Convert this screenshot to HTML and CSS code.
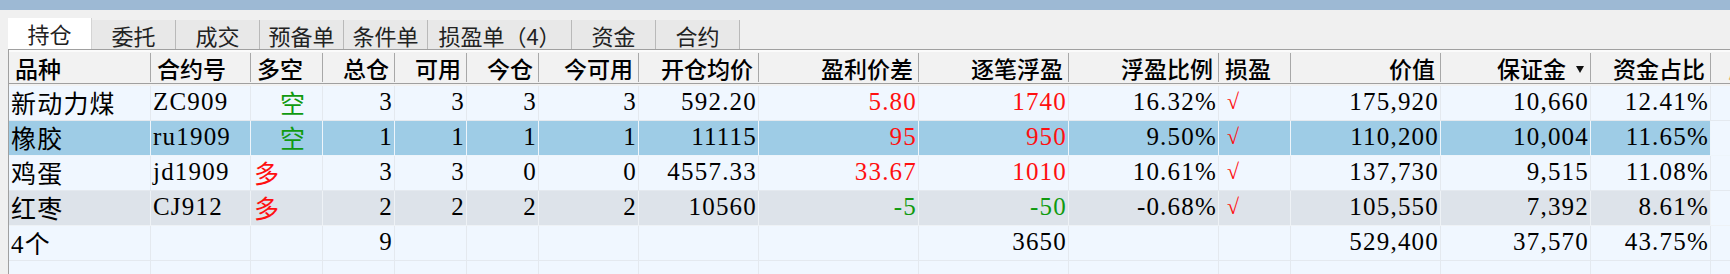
FILE: index.html
```html
<!DOCTYPE html>
<html lang="zh-CN">

<head>
  <meta charset="UTF-8">
  <title>持仓</title>
  <link rel="stylesheet" href="styles.css">
</head>

<body>
  <div class="titlebar"></div>

  <div class="tabs">
    <div class="tab active">持仓</div>
    <div class="tab">委托</div>
    <div class="tab">成交</div>
    <div class="tab">预备单</div>
    <div class="tab">条件单</div>
    <div class="tab wide">损盈单（4）</div>
    <div class="tab">资金</div>
    <div class="tab">合约</div>
  </div>

  <div class="grid">
    <div class="row head">
      <div class="cell">品种</div>
      <div class="cell">合约号</div>
      <div class="cell">多空</div>
      <div class="cell r">总仓</div>
      <div class="cell r">可用</div>
      <div class="cell r">今仓</div>
      <div class="cell r">今可用</div>
      <div class="cell r">开仓均价</div>
      <div class="cell r">盈利价差</div>
      <div class="cell r">逐笔浮盈</div>
      <div class="cell r">浮盈比例</div>
      <div class="cell">损盈</div>
      <div class="cell r">价值</div>
      <div class="cell r sorted">保证金<span class="arrow"></span></div>
      <div class="cell r">资金占比</div>
      <div class="cell extra">风</div>
    </div>

    <!-- 持仓明细 -->
    <div class="row">
      <div class="cell">新动力煤</div>
      <div class="cell">ZC909</div>
      <div class="cell short">空</div>
      <div class="cell r">3</div>
      <div class="cell r">3</div>
      <div class="cell r">3</div>
      <div class="cell r">3</div>
      <div class="cell r">592.20</div>
      <div class="cell r up">5.80</div>
      <div class="cell r up">1740</div>
      <div class="cell r">16.32%</div>
      <div class="cell check">√</div>
      <div class="cell r">175,920</div>
      <div class="cell r">10,660</div>
      <div class="cell r">12.41%</div>
      <div class="cell fill"></div>
    </div>
    <div class="row selected">
      <div class="cell">橡胶</div>
      <div class="cell">ru1909</div>
      <div class="cell short">空</div>
      <div class="cell r">1</div>
      <div class="cell r">1</div>
      <div class="cell r">1</div>
      <div class="cell r">1</div>
      <div class="cell r">11115</div>
      <div class="cell r up">95</div>
      <div class="cell r up">950</div>
      <div class="cell r">9.50%</div>
      <div class="cell check">√</div>
      <div class="cell r">110,200</div>
      <div class="cell r">10,004</div>
      <div class="cell r">11.65%</div>
      <div class="cell fill"></div>
    </div>
    <div class="row">
      <div class="cell">鸡蛋</div>
      <div class="cell">jd1909</div>
      <div class="cell long">多</div>
      <div class="cell r">3</div>
      <div class="cell r">3</div>
      <div class="cell r">0</div>
      <div class="cell r">0</div>
      <div class="cell r">4557.33</div>
      <div class="cell r up">33.67</div>
      <div class="cell r up">1010</div>
      <div class="cell r">10.61%</div>
      <div class="cell check">√</div>
      <div class="cell r">137,730</div>
      <div class="cell r">9,515</div>
      <div class="cell r">11.08%</div>
      <div class="cell fill"></div>
    </div>
    <div class="row alt">
      <div class="cell">红枣</div>
      <div class="cell">CJ912</div>
      <div class="cell long">多</div>
      <div class="cell r">2</div>
      <div class="cell r">2</div>
      <div class="cell r">2</div>
      <div class="cell r">2</div>
      <div class="cell r">10560</div>
      <div class="cell r down">-5</div>
      <div class="cell r down">-50</div>
      <div class="cell r">-0.68%</div>
      <div class="cell check">√</div>
      <div class="cell r">105,550</div>
      <div class="cell r">7,392</div>
      <div class="cell r">8.61%</div>
      <div class="cell fill"></div>
    </div>

    <!-- 合计 -->
    <div class="row">
      <div class="cell">4个</div>
      <div class="cell"></div>
      <div class="cell"></div>
      <div class="cell r">9</div>
      <div class="cell"></div>
      <div class="cell"></div>
      <div class="cell"></div>
      <div class="cell"></div>
      <div class="cell"></div>
      <div class="cell r">3650</div>
      <div class="cell"></div>
      <div class="cell"></div>
      <div class="cell r">529,400</div>
      <div class="cell r">37,570</div>
      <div class="cell r">43.75%</div>
      <div class="cell fill"></div>
    </div>
    <div class="row">
      <div class="cell"></div>
      <div class="cell"></div>
      <div class="cell"></div>
      <div class="cell"></div>
      <div class="cell"></div>
      <div class="cell"></div>
      <div class="cell"></div>
      <div class="cell"></div>
      <div class="cell"></div>
      <div class="cell"></div>
      <div class="cell"></div>
      <div class="cell"></div>
      <div class="cell"></div>
      <div class="cell"></div>
      <div class="cell"></div>
      <div class="cell fill"></div>
    </div>
  </div>
</body>

</html>
```

FILE: styles.css
```css
body {
  margin: 0;
  width: 1730px;
  height: 274px;
  overflow: hidden;
  background: #f0f0f0;
  font-family: "Liberation Serif", "Noto Sans CJK SC", serif;
  color: #000;
}

.titlebar {
  height: 10px;
  background: #9db9d4;
}

.tabs {
  display: flex;
  align-items: flex-end;
  height: 39px;
  padding-left: 8px;
}

.tab {
  width: 84px;
  height: 29px;
  box-sizing: border-box;
  background: #e8e8e8;
  border-right: 1px solid #b9b9b9;
  display: flex;
  align-items: center;
  justify-content: center;
  font-family: "Noto Sans CJK SC", sans-serif;
  font-size: 22px;
  color: #222;
}

.tab.wide {
  width: 144px;
}

.tab.active {
  height: 31px;
  background: #fff;
  border-right: 1px solid #d4d4d4;
  padding-bottom: 2px;
}

.grid {
  margin-left: 8px;
  border-left: 1px solid #a0a0a0;
  border-top: 1px solid #a0a0a0;
}

.row {
  display: grid;
  grid-template-columns: 142px 100px 72px 72px 72px 72px 100px 120px 160px 150px 150px 72px 150px 150px 120px 100px;
  height: 35px;
  background: #f0f7ff;
}

.cell {
  box-sizing: border-box;
  border-right: 1px solid #e4e9ef;
  border-bottom: 1px solid #e4e9ef;
  padding: 0 1px 3px 2px;
  display: flex;
  align-items: center;
  font-size: 25px;
  letter-spacing: 1.2px;
  white-space: nowrap;
  overflow: hidden;
}

.cell.r {
  justify-content: flex-end;
}

.row.selected {
  background: #9ecce6;
}

.row.selected .cell {
  border-color: #eef5fb;
}

.row.alt {
  background: #dde3ea;
}

.row.alt .cell {
  border-color: #eef2f6;
}

.cell.fill {
  background: #f0f7ff;
}

.head {
  height: 34px;
  background: #f2f2f2;
  border-top: 2px solid #fbfbfb;
}

.head .cell {
  position: relative;
  height: 32px;
  padding: 0 6px 0 6px;
  border-right: 0;
  border-bottom: 1px solid #a0a0a0;
  font-family: "Noto Sans CJK SC", sans-serif;
  font-weight: 500;
  font-size: 23px;
  letter-spacing: 0;
}

.head .cell::after {
  content: "";
  position: absolute;
  right: 0;
  top: 1px;
  bottom: 1px;
  width: 1px;
  background: #a8a8a8;
}

.head .sorted {
  padding-right: 25px;
}

.arrow {
  position: absolute;
  right: 7px;
  top: 14px;
  border-left: 4px solid transparent;
  border-right: 4px solid transparent;
  border-top: 7px solid #111;
}

.head .extra {
  padding-left: 17px;
  color: #e8b070;
}

.up {
  color: #ff1010;
}

.down {
  color: #109a10;
}

.short {
  padding-left: 29px;
  color: #109a10;
}

.long {
  padding-left: 3px;
  color: #ff1010;
}

.check {
  padding-left: 8px;
  color: #ff1010;
  font-size: 22px;
}
```
